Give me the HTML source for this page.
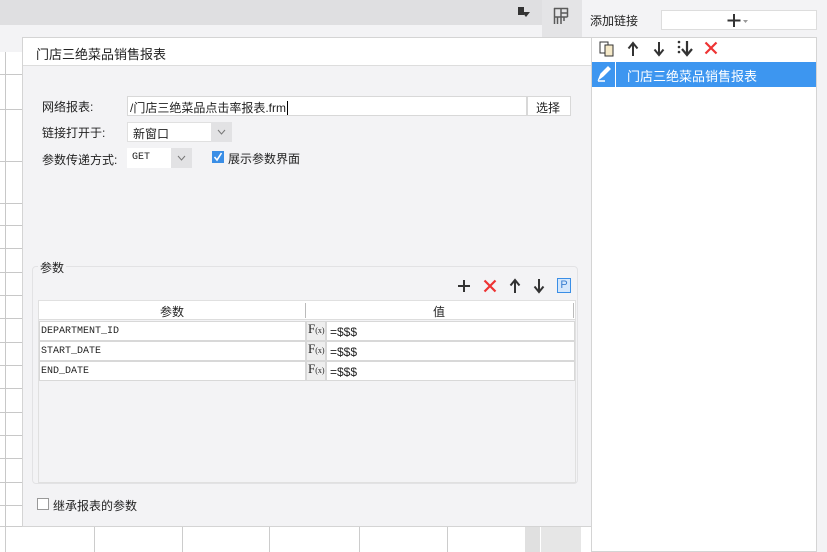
<!DOCTYPE html>
<html><head><meta charset="utf-8"><style>
*{box-sizing:border-box;margin:0;padding:0}
body{width:827px;height:552px;position:relative;overflow:hidden;background:#f3f3f5;font-family:"Liberation Sans","Noto Sans CJK SC",sans-serif;font-size:12px;color:#222}
.abs{position:absolute}
.hl{position:absolute;left:0;width:22px;height:1px;background:#c8c8c8}
.mono{font-family:"Liberation Mono","Noto Sans CJK SC",monospace;font-size:10px}
.cell{position:absolute;background:#fff;border:1px solid #d8d8d8}
</style></head><body>
<div class="abs" style="left:0;top:0;width:542px;height:25px;background:#dfdfe1"></div>
<svg class="abs" style="left:517px;top:6px" width="14" height="12"><rect x="1" y="1" width="6" height="8" fill="#333"/><path d="M5 6h8l-4 5z" fill="#333"/></svg>
<div class="abs" style="left:542px;top:0;width:40px;height:37px;background:#e4e4e6"></div>
<svg class="abs" style="left:552px;top:7px" width="18" height="18"><path d="M2 1.5h14M2.5 1v16M15.5 1v9M2.5 10h13M9 2v15M5.5 10v7M12 10v4M9 6h7" stroke="#5a5a5a" stroke-width="1.5" fill="none"/></svg>
<div class="abs" style="left:0;top:52px;width:22px;height:474px;background:#fff"></div>
<div class="hl" style="top:74px"></div><div class="hl" style="top:109px"></div><div class="hl" style="top:161px"></div><div class="hl" style="top:203px"></div><div class="hl" style="top:225px"></div><div class="hl" style="top:248px"></div><div class="hl" style="top:272px"></div><div class="hl" style="top:295px"></div><div class="hl" style="top:318px"></div><div class="hl" style="top:342px"></div><div class="hl" style="top:365px"></div><div class="hl" style="top:388px"></div><div class="hl" style="top:412px"></div><div class="hl" style="top:435px"></div><div class="hl" style="top:458px"></div><div class="hl" style="top:482px"></div><div class="hl" style="top:505px"></div>
<div class="abs" style="left:5px;top:52px;width:1px;height:474px;background:#c8c8c8"></div>
<div class="abs" style="left:0;top:526px;width:592px;height:26px;background:#fff;border-top:1px solid #ccc"></div>
<div class="abs" style="left:5px;top:527px;width:1px;height:25px;background:#ccc"></div>
<div class="abs" style="left:94px;top:527px;width:1px;height:25px;background:#ccc"></div>
<div class="abs" style="left:182px;top:527px;width:1px;height:25px;background:#ccc"></div>
<div class="abs" style="left:269px;top:527px;width:1px;height:25px;background:#ccc"></div>
<div class="abs" style="left:359px;top:527px;width:1px;height:25px;background:#ccc"></div>
<div class="abs" style="left:447px;top:527px;width:1px;height:25px;background:#ccc"></div>
<div class="abs" style="left:525px;top:527px;width:15px;height:25px;background:#e0e0e0"></div>
<div class="abs" style="left:541px;top:527px;width:40px;height:25px;background:#e6e6e6"></div>

<div class="abs" style="left:22px;top:37px;width:570px;height:490px;background:#f3f3f5;border:1px solid #d4d4d4">
 <div style="height:28px;background:#fff;border-bottom:1px solid #ddd;padding:6px 0 0 13px;font-size:13px">门店三绝菜品销售报表</div>
</div>
<div class="abs" style="left:42px;top:98px">网络报表:</div>
<div class="abs" style="left:127px;top:96px;width:400px;height:20px;background:#fff;border:1px solid #d8d8d8;padding:2px 2px;font-size:12px">/门店三绝菜品点击率报表.frm<span style="border-left:1px solid #000;margin-left:1px"></span></div>
<div class="abs" style="left:527px;top:96px;width:44px;height:20px;background:#fff;border:1px solid #d8d8d8;padding:2px 8px">选择</div>
<div class="abs" style="left:42px;top:124px">链接打开于:</div>
<div class="abs" style="left:127px;top:122px;width:105px;height:20px;background:#fff;border:1px solid #e0e0e0;padding:2px 5px">新窗口</div>
<div class="abs" style="left:211px;top:122px;width:21px;height:20px;background:#e2e2e4"><svg width="21" height="20"><path d="M7 8l3.5 4 3.5-4" stroke="#777" fill="none"/></svg></div>
<div class="abs" style="left:42px;top:151px">参数传递方式:</div>
<div class="abs mono" style="left:127px;top:148px;width:65px;height:20px;background:#fff;padding:4px 5px">GET</div>
<div class="abs" style="left:171px;top:148px;width:21px;height:20px;background:#e2e2e4"><svg width="21" height="20"><path d="M7 8l3.5 4 3.5-4" stroke="#777" fill="none"/></svg></div>
<div class="abs" style="left:212px;top:151px;width:12px;height:12px;background:#3a8ee6"><svg width="12" height="12"><path d="M2.5 6l2.5 3 4.5-7" stroke="#fff" stroke-width="1.6" fill="none"/></svg></div>
<div class="abs" style="left:228px;top:150px">展示参数界面</div>

<div class="abs" style="left:32px;top:266px;width:546px;height:218px;border:1px solid #e2e2e4;border-radius:4px"></div>
<div class="abs" style="left:38px;top:259px;background:#f3f3f5;padding:0 2px">参数</div>
<svg class="abs" style="left:457px;top:279px" width="14" height="14"><path d="M7 1v12M1 7h12" stroke="#333" stroke-width="2"/></svg>
<svg class="abs" style="left:483px;top:279px" width="14" height="14"><path d="M1.5 1.5l11 11M12.5 1.5l-11 11" stroke="#e33" stroke-width="2.2"/></svg>
<svg class="abs" style="left:508px;top:278px" width="14" height="16"><path d="M7 15V3M2.5 7.5L7 2l4.5 5.5" stroke="#333" stroke-width="2" fill="none"/></svg>
<svg class="abs" style="left:532px;top:278px" width="14" height="16"><path d="M7 1v12M2.5 8.5L7 14l4.5-5.5" stroke="#333" stroke-width="2" fill="none"/></svg>
<div class="abs" style="left:557px;top:278px;width:14px;height:15px;border:1px solid #3a8ee6;background:#d5e7fb;color:#3a7fd0;font-size:11px;text-align:center;line-height:13px">P</div>
<div class="abs" style="left:38px;top:300px;width:538px;height:183px;border:1px solid #e0e0e0;background:#f3f3f5"></div>
<div class="abs" style="left:39px;top:301px;width:536px;height:19px;background:#fff;border-bottom:1px solid #ddd"></div>
<div class="abs" style="left:305px;top:303px;width:1px;height:15px;background:#bbb"></div>
<div class="abs" style="left:573px;top:303px;width:1px;height:15px;background:#bbb"></div>
<div class="abs" style="left:160px;top:303px">参数</div>
<div class="abs" style="left:433px;top:303px">值</div>
<div class="abs" style="left:39px;top:321px;width:536px;height:61px">
 <div class="cell mono" style="left:0;top:0;width:267px;height:20px;padding:4px 1px">DEPARTMENT_ID</div>
 <div class="cell mono" style="left:0;top:20px;width:267px;height:20px;padding:4px 1px">START_DATE</div>
 <div class="cell mono" style="left:0;top:40px;width:267px;height:20px;padding:4px 1px">END_DATE</div>
 <div class="cell" style="left:267px;top:0;width:20px;height:20px;background:#eee;font-family:'Liberation Serif';font-size:13px;line-height:14px;padding-left:1px">F<span style="font-size:8px">(x)</span></div>
 <div class="cell" style="left:267px;top:20px;width:20px;height:20px;background:#eee;font-family:'Liberation Serif';font-size:13px;line-height:14px;padding-left:1px">F<span style="font-size:8px">(x)</span></div>
 <div class="cell" style="left:267px;top:40px;width:20px;height:20px;background:#eee;font-family:'Liberation Serif';font-size:13px;line-height:14px;padding-left:1px">F<span style="font-size:8px">(x)</span></div>
 <div class="cell" style="left:287px;top:0;width:249px;height:20px;padding:3px 3px">=$$$</div>
 <div class="cell" style="left:287px;top:20px;width:249px;height:20px;padding:3px 3px">=$$$</div>
 <div class="cell" style="left:287px;top:40px;width:249px;height:20px;padding:3px 3px">=$$$</div>
</div>
<div class="abs" style="left:37px;top:498px;width:12px;height:12px;background:#fff;border:1px solid #999"></div>
<div class="abs" style="left:53px;top:497px">继承报表的参数</div>

<div class="abs" style="left:590px;top:12px;font-size:12px">添加链接</div>
<div class="abs" style="left:661px;top:10px;width:156px;height:20px;background:#fff;border:1px solid #ddd"><svg width="156" height="20"><path d="M72 3v13M65.5 9.5h13" stroke="#333" stroke-width="2"/><path d="M81 9h5l-2.5 3z" fill="#999"/></svg></div>
<div class="abs" style="left:591px;top:37px;width:226px;height:515px;background:#fff;border:1px solid #d4d4d4"></div>
<svg class="abs" style="left:599px;top:41px" width="16" height="16"><rect x="1" y="1" width="8" height="11" fill="#fff" stroke="#333"/><rect x="6" y="4" width="8" height="11" fill="#f5e9c8" stroke="#333"/></svg>
<svg class="abs" style="left:626px;top:41px" width="14" height="16"><path d="M7 15V3M2.5 7.5L7 2l4.5 5.5" stroke="#333" stroke-width="2" fill="none"/></svg>
<svg class="abs" style="left:652px;top:41px" width="14" height="16"><path d="M7 1v12M2.5 8.5L7 14l4.5-5.5" stroke="#333" stroke-width="2" fill="none"/></svg>
<svg class="abs" style="left:676px;top:40px" width="18" height="18"><circle cx="3" cy="2" r="1.3" fill="#333"/><circle cx="3" cy="7" r="1.3" fill="#333"/><circle cx="3" cy="12" r="1.3" fill="#333"/><path d="M11 1v13M6 9l5 6 5-6" stroke="#333" stroke-width="2.2" fill="none"/></svg>
<svg class="abs" style="left:704px;top:41px" width="14" height="14"><path d="M1.5 1.5l11 11M12.5 1.5l-11 11" stroke="#e33" stroke-width="2.2"/></svg>
<div class="abs" style="left:592px;top:62px;width:224px;height:25px;background:#3d96f0"></div>
<div class="abs" style="left:615px;top:62px;width:1px;height:25px;background:#fff"></div>
<svg class="abs" style="left:596px;top:65px" width="16" height="18"><path d="M3 14l2-5 7-7 2 2-7 7z M2 16h7" stroke="#fff" stroke-width="1.4" fill="#fff"/></svg>
<div class="abs" style="left:627px;top:66px;color:#fff;font-size:13px">门店三绝菜品销售报表</div>
</body></html>
